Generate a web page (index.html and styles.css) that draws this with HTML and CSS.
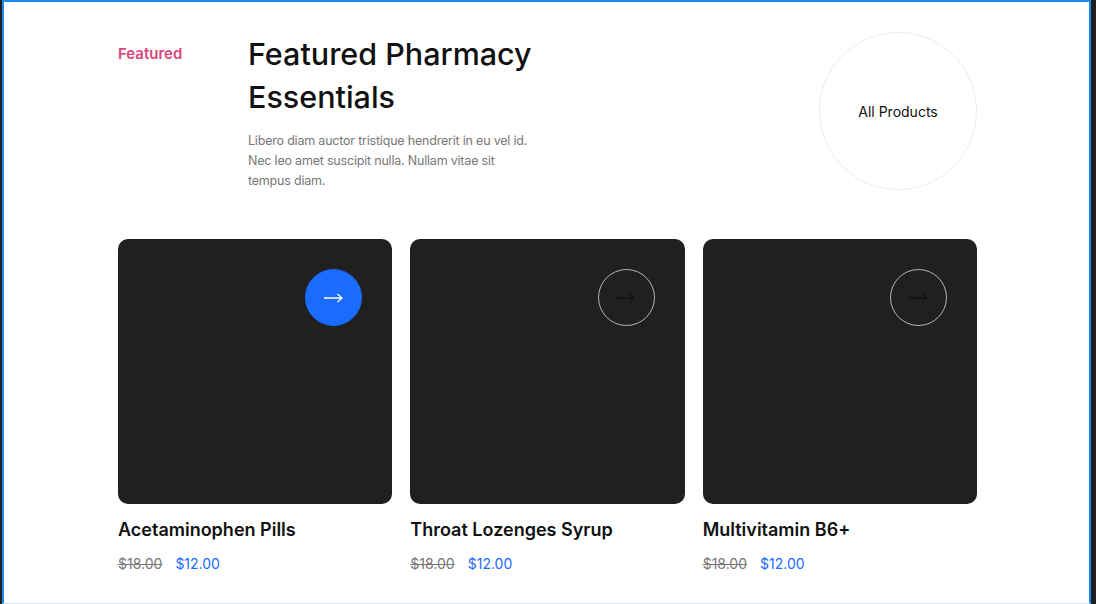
FILE: index.html
```html
<!DOCTYPE html>
<html lang="en">
<head>
  <meta charset="UTF-8">
  <meta name="viewport" content="width=device-width, initial-scale=1.0">
  <title>Featured Pharmacy Essentials</title>
  <link rel="stylesheet" href="styles.css">
</head>
<body>
  <div class="frame">
    <section class="featured">
      <div class="intro">
        <span class="tag">Featured</span>
        <div class="intro-text">
          <h1>Featured Pharmacy Essentials</h1>
          <p>Libero diam auctor tristique hendrerit in eu vel id. Nec leo amet suscipit nulla. Nullam vitae sit tempus diam.</p>
        </div>
        <a class="all-link" href="#">All Products</a>
      </div>

      <div class="products">
        <div class="product">
          <div class="thumb">
            <a class="go active" href="#">
              <svg width="20" height="10" viewBox="0 0 20 10"><path d="M0 5h18M13.5 1l4.5 4-4.5 4" fill="none" stroke="currentColor" stroke-width="1.3"/></svg>
            </a>
          </div>
          <h3>Acetaminophen Pills</h3>
          <div class="price"><s>$18.00</s><span>$12.00</span></div>
        </div>
        <div class="product">
          <div class="thumb">
            <a class="go" href="#">
              <svg width="20" height="10" viewBox="0 0 20 10"><path d="M0 5h18M13.5 1l4.5 4-4.5 4" fill="none" stroke="currentColor" stroke-width="1.3"/></svg>
            </a>
          </div>
          <h3>Throat Lozenges Syrup</h3>
          <div class="price"><s>$18.00</s><span>$12.00</span></div>
        </div>
        <div class="product">
          <div class="thumb">
            <a class="go" href="#">
              <svg width="20" height="10" viewBox="0 0 20 10"><path d="M0 5h18M13.5 1l4.5 4-4.5 4" fill="none" stroke="currentColor" stroke-width="1.3"/></svg>
            </a>
          </div>
          <h3>Multivitamin B6+</h3>
          <div class="price"><s>$18.00</s><span>$12.00</span></div>
        </div>
      </div>
    </section>
  </div>
</body>
</html>
```

FILE: styles.css
```css
body {
  margin: 0;
  padding: 0 5px 0 2px;
  background-color: #1f1f1f;
  font-family: Inter, "Noto Sans", sans-serif;
  color: #111;
}

.frame {
  height: 601px;
  background-color: white;
  border: 2px solid #1a8cf0;
  border-bottom: 1px solid #cfe3f3;
  overflow: hidden;
}

.featured {
  width: 859px;
  margin-left: 114px;
  padding-top: 30px;
}

.intro {
  display: flex;
  align-items: flex-start;
}

.tag {
  width: 130px;
  flex-shrink: 0;
  margin-top: 11px;
  font-size: 15px;
  line-height: 22px;
  font-weight: 600;
  color: #d9467a;
}

.intro-text {
  width: 288px;
}

h1 {
  margin: 0;
  font-size: 30.5px;
  line-height: 43px;
  font-weight: 500;
}

.intro-text p {
  margin: 13px 0 0;
  font-size: 12.5px;
  line-height: 20px;
  letter-spacing: -0.2px;
  color: #777;
}

.all-link {
  margin-left: auto;
  width: 158px;
  height: 158px;
  border: 1px solid #ececec;
  border-radius: 50%;
  box-sizing: border-box;
  display: flex;
  align-items: center;
  justify-content: center;
  font-size: 14px;
  color: #111;
  text-decoration: none;
}

.products {
  display: grid;
  grid-template-columns: repeat(3, 1fr);
  gap: 18px;
  margin-top: 48px;
}

.thumb {
  height: 265px;
  background-color: #202020;
  border-radius: 10px;
  display: flex;
  justify-content: flex-end;
  align-items: flex-start;
  padding: 30px 30px 0 0;
  box-sizing: border-box;
}

.go {
  width: 57px;
  height: 57px;
  border-radius: 50%;
  border: 1px solid #b5b5b5;
  box-sizing: border-box;
  display: flex;
  align-items: center;
  justify-content: center;
  color: #111;
}

.go.active {
  background-color: #1a6bff;
  border-color: #1a6bff;
  color: white;
}

.product h3 {
  margin: 14px 0 0;
  font-size: 18px;
  line-height: 24px;
  font-weight: 600;
}

.price {
  margin-top: 12px;
  font-size: 14px;
  line-height: 20px;
  display: flex;
  gap: 13px;
}

.price s {
  color: #777;
}

.price span {
  color: #1a6bff;
}
```
